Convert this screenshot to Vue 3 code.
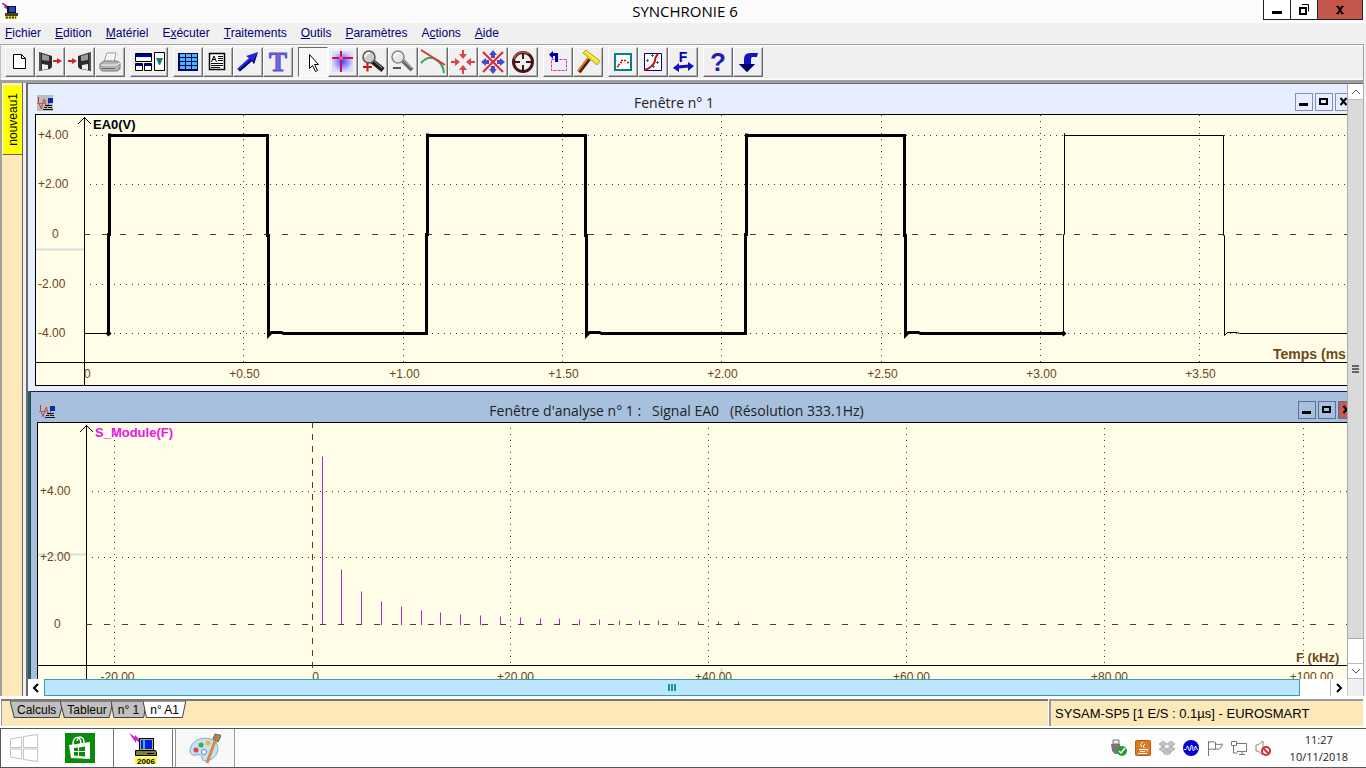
<script setup>
const menus = [
  ['', 'F', 'ichier'], ['', 'E', 'dition'], ['', 'M', 'atériel'], ['E', 'x', 'écuter'],
  ['', 'T', 'raitements'], ['', 'O', 'utils'], ['', 'P', 'aramètres'], ['A', 'c', 'tions'], ['', 'A', 'ide'],
]

const toolGroups = [
  ['new', 'save', 'load', 'print'],
  ['layout'],
  ['grid', 'doc', 'arrow', 'text'],
  ['cursor', 'cross', 'zoomin', 'zoomout', 'tangent', 'inward', 'noscale', 'target'],
  ['select', 'clean'],
  ['scope', 'fit', 'fourier'],
  ['help', 'back'],
]
const toolNames = {
  new: 'Nouveau', save: 'Enregistrer', load: 'Ouvrir', print: 'Imprimer', layout: 'Disposition', grid: 'Tableur',
  doc: 'Rapport', arrow: 'Flèche', text: 'Texte', cursor: 'Pointeur', cross: 'Réticule', zoomin: 'Zoom avant',
  zoomout: 'Zoom arrière', tangent: 'Tangente', inward: 'Calibrage', noscale: 'Sans échelle', target: 'Viseur',
  select: 'Sélection', clean: 'Effacer', scope: 'Acquisition', fit: 'Modélisation', fourier: 'Fourier', help: 'Aide', back: 'Retour',
}

const analysisTitle = "Fenêtre d'analyse n° 1 :   Signal EA0   (Résolution 333.1Hz)"

/* time window: pixels per ms and per volt */
const tx = (t) => Math.round(48 + 318.6 * t) + 0.5
const vy = (v) => Math.round(119 - 24.8 * v) + 0.5
const timeTicks = [0.5, 1, 1.5, 2, 2.5, 3, 3.5]
const voltTicks = [4, 2, -2, -4]
const signed = (n) => (n > 0 ? '+' : '') + n.toFixed(2)

const top = vy(4)
const low = vy(-4)
const mid = vy(0)
const rise = (x) => `L${x - 1} ${low} V${mid} H${x} V${top - 2} V${top}`
const fall = (x) => `L${x - 1} ${top} V${mid + 1} H${x} V${low + 2} L${x + 3} ${low - 1} H${x + 13} L${x + 15} ${low}`
const edges = [0, 1, 2, 3, 4, 5, 6, 7].map((k) => tx(0.077 + 0.5 * k))
const thick = `M${edges[0] - 1} ${low} ` + edges.slice(0, 6).map((x, k) => (k % 2 ? fall(x) : rise(x))).join(' ') + ` H${edges[6] - 1}`
const thin = `M${edges[6] - 1} ${low} ${rise(edges[6])} ${fall(edges[7])} H4000`

/* spectrum window: pixels per kHz and per unit */
const fx = (f) => Math.round(274 + 9.905 * f) + 0.5
const my = (m) => Math.round(201 - 33.3 * m) + 0.5
const freqTicks = [-20, 0, 20, 40, 60, 80, 100]
const harmonics = [5.05, 1.66, 1, 0.7, 0.55, 0.43, 0.37, 0.31, 0.28, 0.25, 0.22, 0.19, 0.19, 0.16, 0.16, 0.13, 0.13, 0.13, 0.1, 0.1, 0.1, 0.1]
const stems = harmonics.map((m, k) => ({ x: fx(2 * k + 0.97), y: my(m) }))
</script>

<template>
  <div class="app">
    <header class="titlebar">
      <svg class="appicon" width="16" height="16" viewBox="0 0 16 16"><path d="M0 0l3 2 0 2 3 2-2-4" fill="none" stroke="#902890" stroke-width="1.5" /><rect x="5" y="3" width="9" height="7" fill="#111" /><rect x="7" y="4" width="6" height="5" fill="#24d" /><rect x="3" y="10" width="13" height="3" fill="#4c440c" /><rect x="3" y="13" width="12" height="3" fill="#e8e030" /><path d="M4 14.500h10" stroke="#443" stroke-width="2" stroke-dasharray="2 1" /></svg>
      <h1>SYNCHRONIE 6</h1>
      <div class="winctl">
        <button aria-label="Réduire"><svg width="12" height="12"><rect x="1" y="7" width="10" height="3" /></svg></button>
        <button aria-label="Restaurer"><svg width="12" height="12"><path d="M2 4h6v6H2z" fill="none" stroke="#000" stroke-width="2" /><path d="M4 .5h6.500v7" fill="none" stroke="#000" /></svg></button>
        <button class="close" aria-label="Fermer"><svg width="12" height="12"><path d="M2 2.500h3M7 2.500h3M2 9.500h3M7 9.500h3" stroke="#000" /><path d="M3.500 2l5 8M8.500 2l-5 8" stroke="#000" stroke-width="2" /></svg></button>
      </div>
    </header>

    <nav class="menubar">
      <a v-for="m in menus" :key="m.join('')" href="#">{{ m[0] }}<u>{{ m[1] }}</u>{{ m[2] }}</a>
    </nav>

    <div class="toolbar">
      <div v-for="(g, i) in toolGroups" :key="i" class="group">
        <button v-for="t in g" :key="t" :class="{ wide: t === 'layout', on: t === 'cursor' }" :aria-label="toolNames[t]">
          <svg v-if="t === 'new'" viewBox="0 0 28 28"><path d="M7.500 6.500h8l4 4v10h-12zM15.500 6.500v4h4" fill="#fff" stroke="#000" /></svg>
          <svg v-else-if="t === 'save'" viewBox="0 0 28 28"><path d="M3 4l13 4v11l-2 2L3 23z" fill="#2c2c2c" /><path d="M6 6l7 2v5l-7-1z" fill="#999" /><path d="M6 16l6 1v4l-6 1z" fill="#f0f0f0" /><path d="M4 5v17" stroke="#777" /><path d="M17 13h5" stroke="#e02020" stroke-width="2" /><path d="M21 10l5 3-5 3z" fill="#e02020" /></svg>
          <svg v-else-if="t === 'load'" viewBox="0 0 28 28"><path d="M25 4L12 8v11l2 2 11 2z" fill="#2c2c2c" /><path d="M22 6l-7 2v5l7-1z" fill="#999" /><path d="M22 16l-6 1v4l6 1z" fill="#f0f0f0" /><path d="M24 5v17" stroke="#777" /><path d="M2 13h5" stroke="#e02020" stroke-width="2" /><path d="M6 10l5 3-5 3z" fill="#e02020" /></svg>
          <svg v-else-if="t === 'print'" viewBox="0 0 28 28"><path d="M8 14l3-9h9l-2 9z" fill="#fff" stroke="#999" /><path d="M12 8h5M11 11h5" stroke="#ddd" /><path d="M4 16l4-3h13l3 2v6l-3 2H6l-2-2z" fill="#b4b4b4" stroke="#777" /><path d="M5 17h15l4-2" stroke="#f4f4f4" fill="none" /><path d="M6 20.500h13" stroke="#666" /></svg>
          <svg v-else-if="t === 'layout'" viewBox="0 0 36 28"><g fill="#fff" stroke="#000"><path d="M4.500 5.500h16v8h-16zM4.500 15.500h7v7h-7zM13.500 15.500h7v7h-7z" /></g><path d="M5 6h15v3H5zM5 16h6v2H5zM14 16h6v2h-6z" fill="#0000a8" /><path d="M23.500 4.500h10v18h-10z" fill="#fff" stroke="#000" /><path d="M25 10h7l-3 7h-1z" fill="#088078" /></svg>
          <svg v-else-if="t === 'grid'" viewBox="0 0 28 28"><rect x="4" y="5" width="20" height="18" fill="#000060" /><g fill="#48b8ee"><template v-for="r in 4" :key="r"><rect v-for="c in 3" :key="c" :x="c * 6" :y="r * 4 + 2" width="5" height="3" /></template></g></svg>
          <svg v-else-if="t === 'doc'" viewBox="0 0 28 28"><path d="M5.500 5.500h15v16h-15z" fill="#fff" stroke="#000" stroke-width="1.500" /><path d="M7.500 14l2.500-6 2.500 6M8.500 11.500h3M14 8.500h5M14 10.500h5M14 12.500h5M7 15.500h12M7 17.500h12M7 19.500h9" fill="none" stroke="#000" /></svg>
          <svg v-else-if="t === 'arrow'" viewBox="0 0 28 28"><path d="M3 21L15 10l-3-2L24 4l-4 12-2-3L6 23z" fill="#2424d8" /><path d="M4.500 22.500L17 11.500l2 2 5-9.500-4 12-2-3L6 23.500z" fill="#000070" /></svg>
          <svg v-else-if="t === 'text'" viewBox="0 0 28 28"><text x="14" y="23" text-anchor="middle" class="serif" fill="#6e64e6" stroke="#5950c4">T</text></svg>
          <svg v-else-if="t === 'cursor'" viewBox="0 0 28 28"><path d="M10.500 6.500v14l3-3 3 6 2-1-3-6h4z" fill="#fff" stroke="#000" /></svg>
          <svg v-else-if="t === 'cross'" viewBox="0 0 28 28"><defs><radialGradient id="glow"><stop offset="0" stop-color="#4a4aff" /><stop offset="1" stop-color="#dcdcff" /></radialGradient></defs><rect x="3" y="3" width="21" height="21" fill="url(#glow)" /><path d="M3 10h21M12 3v21" stroke="#d0104c" stroke-width="2" /><circle cx="12" cy="10" r="1.500" fill="#f8a" /></svg>
          <svg v-else-if="t === 'zoomin'" viewBox="0 0 28 28"><path d="M13 13l11 9" stroke="#1c1c1c" stroke-width="5" /><path d="M14 12l9 8" stroke="#aaa" /><circle cx="10" cy="9" r="6" fill="#c8cdd0" stroke="#555" stroke-width="1.500" /><path d="M6 9q1-4 5-4" stroke="#fff" stroke-width="2" fill="none" /><path d="M4 19h9M8.500 14.500v9" stroke="#d81010" stroke-width="2" /></svg>
          <svg v-else-if="t === 'zoomout'" viewBox="0 0 28 28"><path d="M13 12l10 10" stroke="#666" stroke-width="4" /><path d="M14 12l9 8" stroke="#ccc" /><circle cx="9" cy="9" r="6" fill="#e3e8ea" stroke="#888" stroke-width="1.500" /><path d="M5 9q1-4 5-4" stroke="#fff" stroke-width="2" fill="none" /><path d="M4 20h8" stroke="#555" stroke-width="2" /></svg>
          <svg v-else-if="t === 'tangent'" viewBox="0 0 28 28"><path d="M2 15q7-8 14-4 8 4 9 14" fill="none" stroke="#35a94d" stroke-width="2" /><path d="M2 2l24 15" stroke="#d43838" stroke-width="2" /></svg>
          <svg v-else-if="t === 'inward'" viewBox="0 0 28 28"><g v-for="a in 4" :key="a" :transform="`rotate(${a * 90} 14 14)`" fill="#db4242"><path d="M10 6h8l-4 5z" /><rect x="13" y="2" width="2" height="4" /></g></svg>
          <svg v-else-if="t === 'noscale'" viewBox="0 0 28 28"><g v-for="a in 4" :key="a" :transform="`rotate(${a * 90} 14 14)`" fill="#4848c8"><path d="M10 7h8l-4-5z" /><rect x="12" y="7" width="4" height="3" /></g><path d="M4 4l20 20M24 4L4 24" stroke="#e02828" stroke-width="2" /></svg>
          <svg v-else-if="t === 'target'" viewBox="0 0 28 28"><circle cx="14" cy="14" r="9.500" fill="none" stroke="#4c1414" stroke-width="3" /><path d="M5 11a9.500 9.500 0 0 1 15-5" fill="none" stroke="#b85050" stroke-width="1.500" /><path d="M14 5v6M14 17v6M5 14h6M17 14h6" stroke="#391818" stroke-width="2" /></svg>
          <svg v-else-if="t === 'select'" viewBox="0 0 28 28"><path d="M7.500 11.500h15v11h-15z" fill="none" stroke="#d030d0" stroke-dasharray="3 1" /><path d="M8 6.500h4.500V14" fill="none" stroke="#0000b0" stroke-width="3" /><path d="M9 3v8L5 6.500z" fill="#0000b0" /></svg>
          <svg v-else-if="t === 'clean'" viewBox="0 0 28 28"><path d="M5 24l10-13" stroke="#4a2010" stroke-width="4" /><path d="M4 23l10-13" stroke="#e47828" stroke-width="2" /><path d="M9 5l3-3 14 11-3 4z" fill="#eedf20" stroke="#b5a824" /><path d="M12 4l12 10" stroke="#fffa90" /></svg>
          <svg v-else-if="t === 'scope'" viewBox="0 0 28 28"><path d="M6 6h16v16H6z" fill="#fff" stroke="#078080" stroke-width="2" /><path d="M8 18.500h2M9 16.500h2M11 14.500h2M12 12.500h6M18 14.500h2" stroke="#c01010" stroke-width="1.500" stroke-dasharray="2 1" /></svg>
          <svg v-else-if="t === 'fit'" viewBox="0 0 28 28"><path d="M5.500 5.500h17v17h-17z" fill="#fff" stroke="#000090" /><path d="M6 22q8-3 10-9 0-4 3-7" fill="none" stroke="#c81010" stroke-width="2" /><path d="M12 7.500h3M13.500 6v3M7 12.500h3M8.500 11v3M17 14.500h3M18.500 13v3M13 18.500h3M14.500 17v3" stroke="#356a55" /></svg>
          <svg v-else-if="t === 'fourier'" viewBox="0 0 28 28"><text x="14" y="14" text-anchor="middle" class="sans" fill="#0000b4">F</text><path d="M9 19l11-1" stroke="#1010bc" stroke-width="3" /><path d="M4 20l6-5v9zM25 18l-6 5v-9z" fill="#1010bc" /></svg>
          <svg v-else-if="t === 'help'" viewBox="0 0 28 28"><text x="14" y="23" text-anchor="middle" class="big" fill="#1e1eb4">?</text></svg>
          <svg v-else viewBox="0 0 28 28"><path d="M24 5l-1 4h-5q-1 0-1 3v4h4l-8 8-8-8h5v-5q0-6 6-6z" fill="#1212c5" /><path d="M5 16h16l-8 8z" fill="#000070" /></svg>
        </button>
      </div>
    </div>

    <main class="workspace">
      <aside class="sidetabs"><button><span>nouveau1</span></button></aside>
      <div class="mdi">
        <div class="view">
          <div class="docs">
            <section class="win first">
              <div class="wtitle">
                <svg class="docicon" width="16" height="16"><rect width="16" height="16" fill="#bcbcbc" /><path d="M1.500 2v5l2 5 1 2 1-6 2-4 1 5 2 3 2-6" fill="none" stroke="#c83838" /><path d="M0 8.500h9" stroke="#a66" /><path d="M11 3h5v5h-5z" fill="#002cb8" /><path d="M8 10.500h7M7 12.500h3M11 12.500h4M6 14.500h10" stroke="#111" /></svg>
                <h2>Fenêtre n° 1</h2>
                <div class="wctl">
                  <button aria-label="Réduire"><svg width="12" height="12"><rect x="1" y="7" width="9" height="3" /></svg></button>
                  <button aria-label="Agrandir"><svg width="12" height="12"><path d="M2 3h7v5H2z" fill="none" stroke="#000" stroke-width="2" /></svg></button>
                  <button aria-label="Fermer"><svg width="12" height="12"><path d="M2.500 2l6 7M8.500 2l-6 7" stroke="#000" stroke-width="2" /></svg></button>
                </div>
              </div>
              <svg class="chart time">
                <path d="M0 134.500h48" stroke="#ddd" stroke-width="2" />
                <g class="dots">
                  <path v-for="t in timeTicks" :key="t" :d="`M${tx(t)} 0V247`" />
                  <path v-for="v in voltTicks" :key="v" :d="`M54 ${vy(v)}H4000`" />
                </g>
                <path class="dash" :d="`M48 ${mid}H4000`" />
                <path d="M48.500 270V2M42 9l6.500-6.500L55 9" class="axis" />
                <path d="M0 247.500H4000" class="axis" />
                <path :d="`M48 ${low}H${edges[0]}`" class="axis" />
                <path :d="thick" class="wave" />
                <path :d="thin" class="axis" />
                <path v-for="x in [edges[0] - 1, edges[6] - 1]" :key="x" :d="`M${x - 3} ${low}l3-3 3 3-3 3z`" />
                <g class="lbl">
                  <text v-for="v in voltTicks" :key="v" x="2" :y="vy(v) + 3">{{ signed(v) }}</text>
                  <text x="16" :y="mid + 3">0</text>
                  <text x="48" y="263">0</text>
                  <text v-for="t in timeTicks" :key="t" :x="tx(t) + 1" y="263" text-anchor="middle">{{ signed(t) }}</text>
                </g>
                <text x="57" y="14" class="name">EA0(V)</text>
                <svg x="100%" overflow="visible"><text x="-74" y="244" class="unit">Temps (ms</text></svg>
              </svg>
            </section>

            <section class="win second">
              <div class="wtitle">
                <svg class="docicon" width="16" height="16"><rect x="4" width="12" height="5" fill="#bcbcbc" /><path d="M1.500 2v5l2 5 1 2 1-6 2-4 1 5 2 3 2-6" fill="none" stroke="#c83838" /><path d="M0 8.500h9" stroke="#a66" /><path d="M11 3h5v5h-5z" fill="#002cb8" /><path d="M8 10.500h7M7 12.500h3M11 12.500h4M6 14.500h10" stroke="#111" /></svg>
                <h2>{{ analysisTitle }}</h2>
                <div class="wctl">
                  <button aria-label="Réduire"><svg width="12" height="12"><rect x="1" y="7" width="9" height="3" /></svg></button>
                  <button aria-label="Agrandir"><svg width="12" height="12"><path d="M2 3h7v5H2z" fill="none" stroke="#000" stroke-width="2" /></svg></button>
                  <button class="red" aria-label="Fermer"><svg width="12" height="12"><path d="M2.500 2l6 7M8.500 2l-6 7" stroke="#000" stroke-width="2" /></svg></button>
                </div>
              </div>
              <svg class="chart spectrum">
                <path d="M0 131.500h48M683.500 245v8" stroke="#ddd" stroke-width="2" />
                <g class="dots">
                  <path v-for="f in freqTicks.filter((n) => n)" :key="f" :d="`M${fx(f)} -1V242`" />
                  <path v-for="m in [4, 2]" :key="m" :d="`M54 ${my(m)}H4000`" />
                </g>
                <path d="M48.500 300V2M42 9l6.500-6.500L55 9" class="axis" />
                <path d="M0 242.500H4000" class="axis" />
                <path v-for="s in stems" :key="s.x" :d="`M${s.x} ${s.y}V202`" class="stem" />
                <path class="dash" :d="`M48 ${my(0)}H4000`" />
                <path class="dash up" :d="`M${fx(0)} -1V246`" />
                <g class="lbl">
                  <text v-for="m in [4, 2]" :key="m" x="2" :y="my(m) + 3">{{ signed(m) }}</text>
                  <text x="16" :y="my(0) + 3">0</text>
                  <text v-for="f in freqTicks" :key="f" :x="fx(f) + (f < 0 ? 3 : f > 99 ? 8 : f ? 5 : 3)" y="258" text-anchor="middle">{{ f ? signed(f) : 0 }}</text>
                </g>
                <text x="57" y="14" class="name pink">S_Module(F)</text>
                <svg x="100%" overflow="visible"><text x="-51" y="239" class="name brown">F (kHz)</text></svg>
              </svg>
            </section>
          </div>
          <div class="vscroll">
            <button aria-label="Haut"><svg width="10" height="8"><path d="M1 6l4-4 4 4" /></svg></button>
            <div class="vthumb"><svg width="8" height="8"><path d="M0 1h7M0 4h7M0 7h7" stroke="#666" stroke-width="2" /></svg></div>
            <div class="vtrack"></div>
            <button aria-label="Bas"><svg width="10" height="8"><path d="M1 2l4 4 4-4" /></svg></button>
          </div>
        </div>
        <div class="hscroll">
          <button aria-label="Gauche"><svg width="8" height="10"><path d="M6 1L2 5l4 4" /></svg></button>
          <div class="hthumb"><svg width="9" height="7"><path d="M1 0v7M4 0v7M7 0v7" stroke="#2090a8" stroke-width="2" /></svg></div>
          <div class="htrack"></div>
          <button aria-label="Droite"><svg width="8" height="10"><path d="M2 1l4 4-4 4" /></svg></button>
          <div class="corner"></div>
        </div>
      </div>
    </main>

    <footer class="statusbar">
      <div class="sheets">
        <button v-for="(s, i) in ['Calculs', 'Tableur', 'n° 1', 'n° A1']" :key="s" :class="{ active: i === 3 }">
          <svg preserveAspectRatio="none" viewBox="0 0 100 17"><path d="M0 0H100L92 16.500H8z" vector-effect="non-scaling-stroke" /></svg><span>{{ s }}</span>
        </button>
      </div>
      <div class="device">SYSAM-SP5 [1 E/S : 0.1µs] - EUROSMART</div>
    </footer>

    <div class="taskbar">
      <button class="task plain" aria-label="Démarrer"><svg width="28" height="28"><path d="M.5 5l11-2v10.500H.500zM13.500 2.500L27.500.500v13h-14zM.5 15h11v10L.500 23zM13.500 15h14v12.500l-14-2z" fill="#fff" stroke="#c4c4c4" /></svg></button>
      <button class="task shop" aria-label="Store"><svg width="30" height="30"><rect width="30" height="30" fill="#0a8a0a" /><path d="M4 12l21-3v17l-19-1z" fill="#fff" /><path d="M8 12c0-10 8-10 8-1M12 8c1-6 7-5 7 2" fill="none" stroke="#fff" stroke-width="1.500" /><path d="M9 15l4-.5V18H9zM14 14.500l6-1V18h-6zM9 19h4v4l-4-.5zM14 19h6v4.500L14 23z" fill="#0a8a0a" /></svg></button>
      <button class="task open" aria-label="Synchronie"><svg width="30" height="32"><path d="M1 1l6 4v-2l5 5v3l-4-3v3z" fill="#d020d0" /><rect x="11.500" y="6.500" width="14" height="12" fill="#b8b060" stroke="#000" /><rect x="13" y="8" width="11" height="9" fill="#0018f0" /><rect x="15" y="8" width="2" height="9" fill="#18c8f8" /><path d="M7.500 18.500h20l1 2v3h-21z" fill="#857e2c" stroke="#000" /><path d="M19 21.500h7" stroke="#000" /><rect x="7" y="25" width="22" height="7" fill="#fff838" /><text x="18" y="32" text-anchor="middle" class="year">2006</text></svg></button>
      <button class="task open paint" aria-label="Paint"><svg width="32" height="32"><path d="M1 19C1 9 14 3 24 8c7 4 7 15-3 20-5 2-8 1-8-2s-3-4-6-3-6-1-6-4z" fill="#c4e2f2" stroke="#7ba8c4" /><circle cx="7" cy="18" r="2.500" fill="#d84848" /><circle cx="12" cy="13" r="2.500" fill="#44a850" /><circle cx="19" cy="11" r="2.500" fill="#e8b838" /><circle cx="15" cy="20" r="2.500" fill="#fff" stroke="#5585b0" /><path d="M18 31l8-22" stroke="#d58a48" stroke-width="3" /><path d="M24 7l2-5 4 1 3 0-2 3-2 4z" fill="#a88458" stroke="#806040" /></svg></button>
      <div class="tray">
        <svg width="16" height="18"><path d="M2 1h6v4H2z" fill="#eee" stroke="#777" /><path d="M0 5h9v7l-3 3H4l-3-3z" fill="#777" /><circle cx="11" cy="12" r="5" fill="#20a030" /><path d="M8 12l2 2 4-5" fill="none" stroke="#fff" stroke-width="1.500" /></svg>
        <svg width="16" height="18"><rect x=".5" y="1.500" width="15" height="15" rx="1" fill="#e07820" stroke="#b85c18" /><path d="M8 3q-4 3-1 5M10 5q-3 2-1 4M4 10.500h7q3-1 1 2M5 12.500h5M3 14.500h9" fill="none" stroke="#fff" /></svg>
        <svg width="16" height="18"><path d="M4 2l4 3-4 3-4-3zM12 2l4 3-4 3-4-3zM4 7l4 3-4 3-4-3zM12 7l4 3-4 3-4-3zM8 11l4 3-4 2-4-2z" fill="#c4c4c4" stroke="#888" stroke-width="0.500" /></svg>
        <svg width="16" height="18"><circle cx="8" cy="9" r="8" fill="#0000d0" /><path d="M1 10.500h2q1 0 1-3h1q1 0 1 4h1q1 0 1-5h1q1 0 1 5h1q1 0 1-4h1q0 3 2 3" fill="none" stroke="#fff" /></svg>
        <svg width="16" height="18"><path d="M1.500 2v15M1.500 3.500q4-2 7 0v7q-4-1-7 0M8.500 5q3 1 7 0l-2 4q-2 2-5 1" fill="none" stroke="#777" /></svg>
        <svg width="16" height="18"><path d="M6 4.500h9.500v8H6M8 15.500h6M11 13v2M.5 2.500h5v4h-5zM2.500 7v7h4" fill="none" stroke="#777" /></svg>
        <svg width="16" height="18"><path d="M1 6h2l5-4v14l-5-4H1z" fill="#fff" stroke="#888" /><circle cx="11" cy="12" r="4" fill="#fff" stroke="#d03030" stroke-width="2" /><path d="M8 9l6 6" stroke="#d03030" stroke-width="2" /></svg>
      </div>
      <div class="clock"><div>11:27</div><div>10/11/2018</div></div>
    </div>
  </div>
</template>

<style>
html, body { background: #fff; }
</style>

<style scoped>
* { box-sizing: border-box; }
.app { display: flex; flex-direction: column; min-height: 100vh; overflow: hidden; background: #f0f0f0; font: 12px/16px "Liberation Sans", Arial, sans-serif; color: #000; }
button { font: inherit; color: inherit; padding: 0; margin: 0; border: 0; background: none; border-radius: 0; display: flex; align-items: center; justify-content: center; flex: none; }
svg { display: block; flex: none; }
h1, h2 { margin: 0; font: 15px/20px "Open Sans", "Noto Sans", sans-serif; flex: 1; text-align: center; white-space: pre; }
h2 { font-size: 14px; color: #222; }

.titlebar { display: flex; align-items: flex-start; height: 23px; background: #fcfcfc; padding-right: 3px; }
.titlebar h1 { padding: 1px 0 0 88px; }
.appicon { margin: 3px 0 0 2px; }
.winctl { display: flex; }
.winctl button { width: 28px; height: 20px; border: 1px solid #222; border-top: 0; margin-left: -1px; background: #fff; }
.winctl .close { width: 46px; background: #c4564c; }

.menubar { display: flex; gap: 14px; padding: 2px 5px 2px; height: 20px; }
.menubar a { color: #000070; text-decoration: none; }

.toolbar { display: flex; gap: 5px; padding: 2px 4px; height: 36px; margin: 1px 2px 0 0; border: 1px solid #a0a0a0; border-left-color: #c0c0c0; border-bottom: 0; box-shadow: inset 0 1px #fff, inset 0 -2px #fafafa; }
.group { display: flex; }
.group button { width: 30px; height: 30px; border: 1px solid #fff; border-right-color: #696969; border-bottom-color: #696969; box-shadow: inset -1px -1px #b0b0b0; background: #f0f0f0; }
.group .wide { width: 38px; }
.group .on { border-color: #696969 #fff #fff #696969; background: #f8f8f8; box-shadow: none; }
.group svg { width: 28px; height: 28px; }
.group .wide svg { width: 36px; }
.serif { font: bold 27px "Liberation Serif", serif; }
.sans { font: bold 14px "Liberation Sans", sans-serif; }
.big { font: bold 26px "Liberation Sans", sans-serif; }

.workspace { flex: 1; display: flex; border-top: 3px solid #a0a0a0; border-left: 2px solid #a0a0a0; margin-right: 2px; border-right: 1px solid #b0b0b0; }
.sidetabs { width: 21px; background: #fde8ba; border-right: 1px solid #696969; padding-top: 1px; flex: none; }
.sidetabs button { width: 20px; height: 71px; background: #ff0; border: solid #fff; border-width: 1px 0 0 1px; border-bottom: 1px solid #665; }
.sidetabs span { writing-mode: vertical-rl; transform: rotate(180deg); }
.mdi { flex: 1; min-width: 0; display: flex; flex-direction: column; margin-left: 3px; border: solid #696969; border-width: 1px 0 0 2px; background: #fff; }
.view { flex: 1; display: flex; min-height: 0; }
.docs { flex: 1; min-width: 0; overflow: hidden; background: #1f6568; }
.win { border-top: 1px solid #223; }
.wtitle { display: flex; align-items: center; height: 30px; padding: 7px 0 0 9px; margin-right: -6px; }
.wctl { display: flex; gap: 2px; }
.wctl button { width: 18px; height: 18px; border: 1px solid #7f8fb5; margin-top: -2px; }
.wctl .red { background: #c75a50; }
.first { border-top: 0; background: #e6eeff; padding-bottom: 5px; }
.second { margin-left: 2px; border-left: 1px solid #345; background: #a7c0dd; }
.second .wtitle { padding-left: 8px; margin-right: -9px; }
.second .wctl button { border-color: #58719b; }
.chart { width: calc(100% - 7px); margin-left: 7px; border: solid #000; border-width: 1px 0 1px 1px; background: #fffde8; overflow: hidden; }
.time { height: 272px; }
.spectrum { height: 257px; margin-left: 6px; width: calc(100% - 6px); border-bottom: 0; }
.axis { fill: none; stroke: #000; }
.wave { fill: none; stroke: #000; stroke-width: 3px; }
.dots path { fill: none; stroke: #4a3a18; stroke-dasharray: 1 5; }
.dash { fill: none; stroke: #5c4012; stroke-dasharray: 6 12; }
.up { stroke-dasharray: 6 6; }
.stem { stroke: #b429b4; }
.lbl { fill: #6b4518; font-size: 12px; }
.name { font-size: 13px; font-weight: bold; }
.unit { font-size: 14px; font-weight: bold; fill: #704818; }
.pink { fill: #e814e8; }
.brown { fill: #704818; }

.vscroll { width: 16px; flex: none; display: flex; flex-direction: column; background: #fff; border-left: 1px solid #aaa; }
.vscroll button { height: 16px; width: 100%; border: solid #bbb; border-width: 0 0 1px; }
.vscroll button:last-child { border-width: 1px 0; }
.vthumb { flex: 540; background: #dadada; display: flex; align-items: center; justify-content: center; border-bottom: 1px solid #aaa; }
.vtrack { flex: 24; }
.hscroll { display: flex; height: 17px; background: #fff; }
.hscroll button { width: 16px; }
.vscroll button path { fill: none; stroke: #555; stroke-width: 1px; }
.hscroll button path { fill: none; stroke: #000; stroke-width: 2px; }
.hthumb { flex: 1256; background: #bce6fb; border: 1px solid #3a9aae; display: flex; align-items: center; justify-content: center; }
.htrack { flex: 30; border-right: 1px solid #bbb; }
.corner { width: 16px; background: #f0f0f0; border-left: 1px solid #ccc; }

.statusbar { display: flex; height: 32px; padding: 3px 3px 2px 1px; background: #fff; gap: 1px; }
.sheets { flex: 1; display: flex; align-items: flex-start; background: #fde8ba; border-top: 2px solid #777; border-left: 1px solid #999; padding-left: 8px; }
.sheets button { position: relative; height: 17px; padding: 0 7px; }
.sheets button + button { margin-left: -3px; }
.sheets svg { position: absolute; inset: 0; width: 100%; height: 100%; }
.sheets path { fill: #c0c0c0; stroke: #444; }
.sheets .active path { fill: #fff; }
.sheets span { position: relative; }
.device { width: 314px; background: #fde8ba; border: solid #999; border-width: 2px 0 0 2px; padding: 4px; font-size: 13px; line-height: 18px; }

.taskbar { display: flex; align-items: stretch; height: 40px; background: #fdfdfd; border: solid #555; border-width: 1px 0 1px 1px; padding-right: 18px; }
.task { width: 60px; }
.plain { width: 46px; }
.shop { width: 66px; }
.open { border: solid #777; border-width: 0 1px; background: #fff; }
.paint { margin-left: 2px; border-color: #999; background: #f8f8f8; }
.year { font: bold 8px "Liberation Sans", sans-serif; }
.tray { display: flex; gap: 8px; align-items: center; margin-left: auto; }
.clock { margin-left: 19px; text-align: center; font: 11px/17px "Open Sans", "Noto Sans", sans-serif; padding-top: 2px; color: #222; }
</style>
